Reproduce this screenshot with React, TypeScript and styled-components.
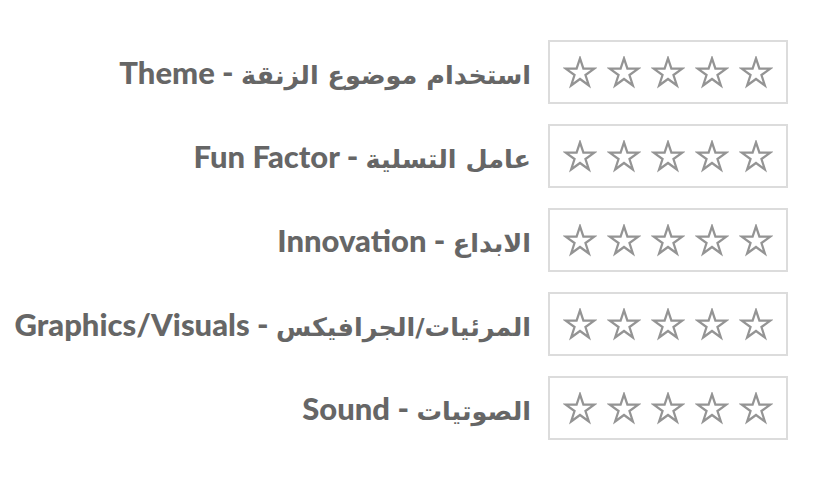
import React from "react";
import styled, { createGlobalStyle } from "styled-components";

const Global = createGlobalStyle`
  html, body { margin: 0; padding: 0; background: #ffffff; }
  body { font-family: Lato, "DejaVu Sans", sans-serif; }
`;

const Page = styled.div`
  width: 817px;
  padding: 40px 29px 0 0;
  box-sizing: border-box;
  display: flex;
  flex-direction: column;
  align-items: flex-end;
  gap: 20px;
`;

const Row = styled.div`
  display: flex;
  align-items: center;
  gap: 17px;
`;

const Label = styled.div`
  display: flex;
  align-items: baseline;
  white-space: nowrap;
  color: #666666;
`;

const Latin = styled.span`
  font-family: Lato, sans-serif;
  font-weight: 900;
  font-size: 31px;
  white-space: pre;
`;

const Arabic = styled.span`
  font-family: "DejaVu Sans", sans-serif;
  font-weight: 700;
  font-size: 25.5px;
  direction: rtl;
  unicode-bidi: isolate;
`;

const StarBox = styled.div`
  width: 240px;
  height: 64px;
  box-sizing: border-box;
  border: 2px solid #dcdcdc;
  display: flex;
  align-items: center;
  justify-content: center;
  gap: 10px;
`;

const StarIcon = styled.svg`
  width: 34px;
  height: 33px;
  display: block;
  fill: none;
  stroke: #949494;
  stroke-width: 2.4;
  stroke-linejoin: miter;
`;

const Star = () => (
  <StarIcon viewBox="0 0 36 35">
    <polygon points="18,2.5 21.6,13.4 33.2,13.4 23.8,20.2 27.4,31.3 18,24.4 8.6,31.3 12.2,20.2 2.8,13.4 14.4,13.4" />
  </StarIcon>
);

const labels: [string, string][] = [
  ["Theme", "استخدام موضوع الزنقة"],
  ["Fun Factor", "عامل التسلية"],
  ["Innovation", "الابداع"],
  ["Graphics/Visuals", "المرئيات/الجرافيكس"],
  ["Sound", "الصوتيات"],
];

export default function App() {
  return (
    <>
      <Global />
      <Page>
        {labels.map(([en, ar]) => (
          <Row key={en}>
            <Label>
              <Latin>{en + " - "}</Latin>
              <Arabic>{ar}</Arabic>
            </Label>
            <StarBox>
              {[0, 1, 2, 3, 4].map((i) => (
                <Star key={i} />
              ))}
            </StarBox>
          </Row>
        ))}
      </Page>
    </>
  );
}
